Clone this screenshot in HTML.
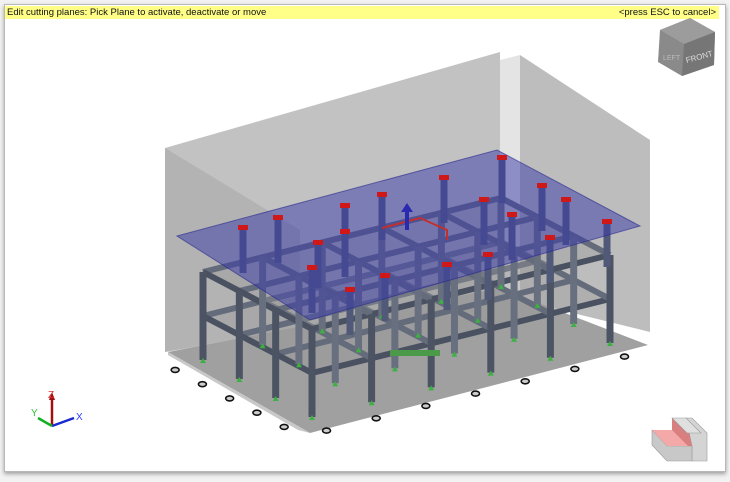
<!DOCTYPE html>
<html><head><meta charset="utf-8"><style>
html,body{margin:0;padding:0;width:730px;height:482px;overflow:hidden;background:#f2f2f2;font-family:"Liberation Sans",sans-serif}
#win{position:absolute;left:4px;top:4px;width:720px;height:466px;background:#fff;border:1px solid #b8b8b8;box-shadow:0 2px 4px rgba(0,0,0,.35)}
#bar{position:absolute;left:5px;top:6px;width:714px;height:13px;background:#ffff88;font-size:9.5px;line-height:13px;color:#111}
#bar span{position:absolute;top:0}
svg{position:absolute;left:0;top:0}
</style></head><body>
<div id="win"></div>
<div id="bar"><span style="left:2px">Edit cutting planes: Pick Plane to activate, deactivate or move</span><span style="right:3px">&lt;press ESC to cancel&gt;</span></div>
<svg width="730" height="482" viewBox="0 0 730 482" id="s">
 <polygon points="165,148 500,52 500,290 165,352" fill="#c2c2c2"/>
 <polygon points="165,148 300,230 300,330 165,352" fill="#a8a8a8" opacity=".6"/>
 <polygon points="520,55 650,140 650,332 520,300" fill="#bdbdbd"/>
 <polygon points="520,55 520,300 500,290 500,60" fill="#e4e4e4"/>
 <polygon points="168,352 500,288 648,345 310,433" fill="#a0a0a0"/>
 <polygon points="168,352 310,433 298,430 168,355" fill="#c8c8c8"/>
 <g id="frame"></g>
 <g id="up"></g>
 <polygon points="177,236 497,150 640,226 310,320" fill="rgba(55,55,170,0.5)" stroke="rgba(40,40,140,0.6)" stroke-width="1"/>
 <g id="caps"></g>
 <polyline points="382,228 420,218 447,230 447,240" fill="none" stroke="#c03030" stroke-width="2"/>
 <line x1="407" y1="230" x2="407" y2="210" stroke="#2a2ab0" stroke-width="4"/>
 <polygon points="401,212 407,203 413,212" fill="#2a2ab0"/>
 <rect x="390" y="350" width="50" height="6" fill="#4a9a4a"/>
 <line x1="52" y1="426" x2="52" y2="398" stroke="#a01010" stroke-width="2.5"/>
 <polygon points="49,400 52,392 55,400" fill="#a01010"/>
 <text x="48" y="398" font-size="10" fill="#e03030" font-family="Liberation Sans,sans-serif">Z</text>
 <line x1="52" y1="426" x2="74" y2="418" stroke="#1a2ad0" stroke-width="2.5"/>
 <text x="76" y="420" font-size="10" fill="#3040ff" font-family="Liberation Sans,sans-serif">X</text>
 <line x1="52" y1="426" x2="38" y2="418" stroke="#10b020" stroke-width="2.5"/>
 <text x="31" y="416" font-size="10" fill="#30c030" font-family="Liberation Sans,sans-serif">Y</text>
 <polygon points="660,30 690,18 715,32 714,65 682,76 658,62" fill="#8a8a8a"/>
 <polygon points="660,30 690,18 715,32 684,44" fill="#9c9c9c"/>
 <polygon points="684,44 715,32 714,65 682,76" fill="#767676"/>
 <text x="686" y="62" font-size="8" fill="#ddd" font-family="Liberation Sans,sans-serif" transform="rotate(-15 690 60)">FRONT</text>
 <text x="663" y="60" font-size="7" fill="#bbb" font-family="Liberation Sans,sans-serif">LEFT</text>
 <polygon points="686,418 692,418 707,433 707,461 692,461 692,446" fill="#d4d4d4" stroke="#999" stroke-width=".6"/>
 <polygon points="652,430 652,445 667,461 692,461 692,446 667,446" fill="#c8c8c8" stroke="#999" stroke-width=".6"/>
 <polygon points="672,418 686,418 692,446 686,446 686,446 672,432" fill="#d88080"/>
 <polygon points="652,430 672,430 688,446 667,446" fill="#f4a8a8"/>
 <polygon points="672,418 686,418 701,433 687,433" fill="#e0e0e0" stroke="#999" stroke-width=".6"/>
</svg>
<script>
var NS="http://www.w3.org/2000/svg";
function el(p,t,a){var e=document.createElementNS(NS,t);for(var k in a)e.setAttribute(k,a[k]);p.appendChild(e);return e}
var F=document.getElementById("frame"),U=document.getElementById("up"),C=document.getElementById("caps");
var B0=[312,417],R=[(610-312)/5,(343-417)/5],L=[(203-312)/3,(360-417)/3];
function P(i,j,h){return [B0[0]+R[0]*i+L[0]*j,B0[1]+R[1]*i+L[1]*j-h]}
function pts(a){return a.map(function(p){return p.join(",")}).join(" ")}
for(var lv=1;lv<=2;lv++){var h=lv*44;
 el(F,"polygon",{points:pts([P(0,0,h),P(5,0,h),P(5,3,h),P(0,3,h)]),fill:"rgba(150,150,150,0.35)"});
 for(var j=3;j>=0;j--){var a=P(0,j,h),b=P(5,j,h);el(F,"line",{x1:a[0],y1:a[1],x2:b[0],y2:b[1],stroke:j==0?"#4a5262":"#646c7c","stroke-width":6})}
 for(var i=0;i<=5;i++){var a=P(i,0,h),b=P(i,3,h);el(F,"line",{x1:a[0],y1:a[1],x2:b[0],y2:b[1],stroke:i==0?"#4a5262":"#646c7c","stroke-width":6})}}
for(var j=3;j>=0;j--)for(var i=0;i<=5;i++){var a=P(i,j,0),b=P(i,j,88);
 el(F,"line",{x1:a[0],y1:a[1],x2:b[0],y2:b[1],stroke:(j==0||i==0)?"#4c5464":"#687080","stroke-width":7});
 el(F,"polygon",{points:(a[0]-3)+","+(a[1]+3)+" "+a[0]+","+(a[1]-2)+" "+(a[0]+3)+","+(a[1]+3),fill:"#3cb040"});}
for(var i=0;i<=6;i++){var a=P(i*5/6,-0.4,0);el(F,"ellipse",{cx:a[0],cy:a[1]+6,rx:4,ry:2.5,fill:"#ccc",stroke:"#111","stroke-width":1.6})}
for(var j=0;j<=4;j++){var a=P(-0.4,j*3/4,0);el(F,"ellipse",{cx:a[0]-4,cy:a[1]+4,rx:4,ry:2.5,fill:"#ccc",stroke:"#111","stroke-width":1.6})}
var caps=[[243,228],[278,218],[312,268],[318,243],[345,206],[382,195],[444,178],[502,158],[542,186],[566,200],[512,215],[484,200],[550,238],[607,222],[488,255],[447,265],[385,276],[350,290],[345,232]];
caps.forEach(function(c){el(U,"rect",{x:c[0]-3.5,y:c[1],width:7,height:45,fill:"#505a78"});
 el(C,"rect",{x:c[0]-5,y:c[1]-3,width:10,height:5,fill:"#d01818"});});
</script>
</body></html>
